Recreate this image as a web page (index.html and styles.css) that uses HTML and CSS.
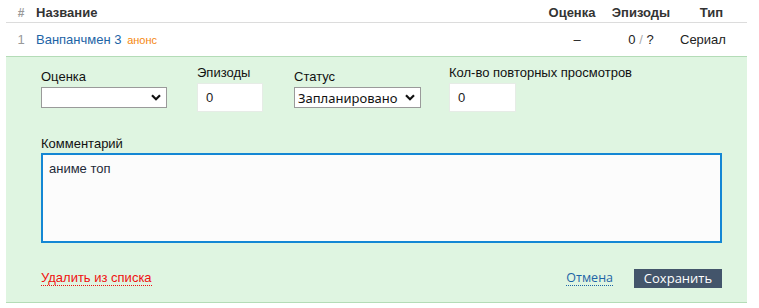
FILE: index.html
```html
<!DOCTYPE html>
<html lang="ru">
<head>
<meta charset="utf-8">
<link rel="stylesheet" href="styles.css">
</head>
<body>
<div class="list">
  <div class="row head">
    <div class="c-num">#</div>
    <div class="c-name">Название</div>
    <div class="c-score">Оценка</div>
    <div class="c-eps">Эпизоды</div>
    <div class="c-type">Тип</div>
  </div>
  <div class="row item">
    <div class="c-num">1</div>
    <div class="c-name"><a class="title">Ванпанчмен 3</a> <span class="anons">анонс</span></div>
    <div class="c-score">–</div>
    <div class="c-eps">0 <span class="sep">/</span> ?</div>
    <div class="c-type">Сериал</div>
  </div>
  <div class="editor">
    <div class="fields">
      <div class="field f-score">
        <label class="lbl">Оценка</label>
        <div class="select sel-score"><span class="sel-text"></span><svg class="chev" viewBox="0 0 10 7" width="10" height="7"><path d="M1 1.2 L5 5.2 L9 1.2" fill="none" stroke="#111" stroke-width="2.2"/></svg></div>
      </div>
      <div class="field f-eps">
        <label class="lbl">Эпизоды</label>
        <div class="input">0</div>
      </div>
      <div class="field f-status">
        <label class="lbl">Статус</label>
        <div class="select sel-status"><span class="sel-text">Запланировано</span><svg class="chev" viewBox="0 0 10 7" width="10" height="7"><path d="M1 1.2 L5 5.2 L9 1.2" fill="none" stroke="#111" stroke-width="2.2"/></svg></div>
      </div>
      <div class="field f-rewatch">
        <label class="lbl">Кол-во повторных просмотров</label>
        <div class="input">0</div>
      </div>
    </div>
    <div class="comment">
      <label class="lbl">Комментарий</label>
      <div class="textarea">аниме топ</div>
    </div>
    <div class="actions">
      <a class="remove">Удалить из списка</a>
      <div class="right">
        <a class="cancel">Отмена</a>
        <button class="save">Сохранить</button>
      </div>
    </div>
  </div>
</div>
</body>
</html>
```

FILE: styles.css
```css
* { box-sizing: border-box; }
body {
  margin: 0;
  background: #fff;
  font-family: "Liberation Sans", Arial, sans-serif;
  font-size: 13px;
  color: #222;
}
.list {
  margin-left: 6px;
  width: 741px;
}
.row {
  display: grid;
  grid-template-columns: 30px 1fr 60px 78px 67px;
  align-items: center;
}
.head {
  height: 23px;
  border-bottom: 1px solid #dcdcdc;
  font-weight: bold;
  color: #333;
  padding-top: 3px;
}
.head .c-num { color: #999; font-weight: bold; font-size: 12px; }
.item {
  height: 33px;
}
.c-num { text-align: center; color: #999; }
.c-score { text-align: center; }
.item .c-score { padding-left: 10px; }
.c-eps { text-align: center; }
.c-type { text-align: right; padding-right: 22px; }
.head .c-type { padding-right: 24px; }
.title { color: #1d64a6; text-decoration: none; }
.anons { color: #f5870f; font-size: 11px; margin-left: 2px; }
.sep { color: #aaa; }

.editor {
  background: #dff5e1;
  border-top: 1px solid #b4dcb7;
  border-bottom: 1px solid #b4dcb7;
  padding: 8px 25px 14px 35px;
}
.fields {
  display: flex;
  align-items: center;
}
.field {
  display: flex;
  flex-direction: column;
}
.lbl {
  display: block;
  line-height: 15px;
  color: #111;
  margin-bottom: 3px;
}
.f-score { width: 126px; margin-right: 30px; }
.f-eps { width: 66px; margin-right: 31px; }
.f-status { width: 127px; margin-right: 28px; }
.select {
  height: 21px;
  background: #fff;
  border: 1px solid #9a9a9a;
  display: flex;
  align-items: center;
  justify-content: space-between;
  padding: 0 5px 0 3px;
}
.sel-text {
  font-family: "Noto Sans", "Open Sans", sans-serif;
  font-size: 13px;
  color: #111;
}
.chev { display: block; }
.input {
  height: 29px;
  width: 66px;
  background: #fff;
  border: 1px solid #e6ece6;
  padding-left: 8px;
  line-height: 27px;
  color: #222;
}
.f-rewatch .input { width: 67px; }

.comment {
  margin-top: 24px;
}
.comment .lbl { margin-bottom: 2px; }
.textarea {
  height: 90px;
  width: 681px;
  background: #fcfcfc;
  border: 2px solid #1487d4;
  padding: 6px 6px;
  color: #1f2a38;
  line-height: 16px;
}
.actions {
  margin-top: 26px;
  display: flex;
  align-items: center;
  justify-content: space-between;
  height: 19px;
}
.remove {
  color: #f0100f;
  border-bottom: 1px dotted #f0100f;
  line-height: 14px;
}
.right {
  display: flex;
  align-items: center;
}
.cancel {
  font-family: "Open Sans", "Noto Sans", sans-serif;
  font-size: 12.5px;
  color: #1d64a6;
  border-bottom: 1px dotted #1d64a6;
  line-height: 14px;
  margin-right: 21px;
}
.save {
  font-family: "Open Sans", "Noto Sans", sans-serif;
  font-size: 13px;
  height: 19px;
  width: 88px;
  background: #43556b;
  color: #fff;
  border: 0;
  padding: 0;
  line-height: 19px;
}
```
